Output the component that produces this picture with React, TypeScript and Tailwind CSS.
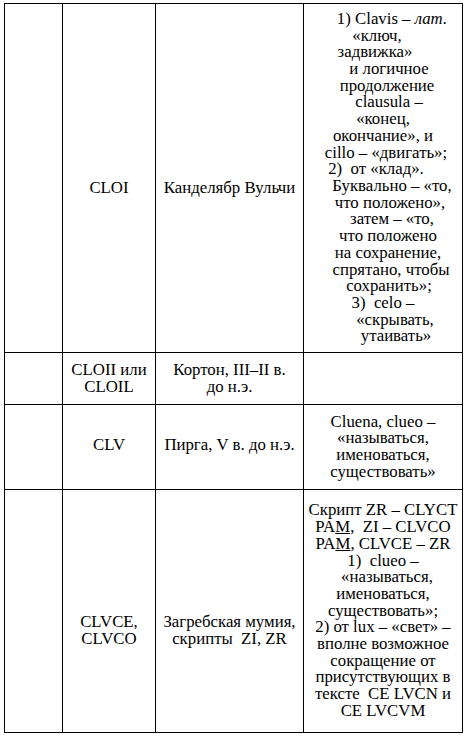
import React from "react";

type Line = { text: React.ReactNode; cls?: string };

const clavis: Line[] = [
  {
    text: (
      <>
        1) Clavis – <i>лат.</i>
      </>
    ),
    cls: "translate-x-[9px]",
  },
  { text: "«ключ,", cls: "-translate-x-[6px]" },
  { text: "задвижка»", cls: "-translate-x-[8px]" },
  { text: "и логичное", cls: "translate-x-[6px]" },
  { text: "продолжение", cls: "translate-x-[4px]" },
  { text: "clausula –", cls: "translate-x-[6px]" },
  { text: "«конец," },
  { text: "окончание», и" },
  { text: "cillo – «двигать»;", cls: "translate-x-[3px]" },
  { text: "2)\u00a0 от «клад».", cls: "-translate-x-[7px]" },
  { text: "Буквально – «то,", cls: "translate-x-[9px]" },
  { text: "что положено»,", cls: "translate-x-[7px]" },
  { text: "затем – «то,", cls: "translate-x-[9px]" },
  { text: "что положено", cls: "translate-x-[5px]" },
  { text: "на сохранение,", cls: "translate-x-[5px]" },
  { text: "спрятано, чтобы", cls: "translate-x-[8px]" },
  { text: "сохранить»;", cls: "translate-x-[6px]" },
  { text: "3)\u00a0 celo –" },
  { text: "«скрывать,", cls: "translate-x-[12px]" },
  { text: "утаивать»", cls: "translate-x-[13px]" },
];

const cluena: Line[] = [
  { text: "Cluena, clueo –" },
  { text: "«называться," },
  { text: "именоваться," },
  { text: "существовать»" },
];

const script: Line[] = [
  { text: "Скрипт ZR – CLYCT" },
  {
    text: (
      <>
        PA<u>M</u>,&nbsp; ZI – CLVCO
      </>
    ),
  },
  {
    text: (
      <>
        PA<u>M</u>, CLVCE – ZR
      </>
    ),
  },
  { text: "1)\u00a0 clueo –" },
  { text: "«называться,", cls: "translate-x-[4px]" },
  { text: "именоваться," },
  { text: "существовать»;" },
  { text: "2) от lux – «свет» –" },
  { text: "вполне возможное" },
  { text: "сокращение от" },
  { text: "присутствующих в" },
  { text: "тексте\u00a0 CE LVCN и" },
  { text: "CE LVCVM" },
];

function Lines({ lines }: { lines: Line[] }) {
  return (
    <>
      {lines.map((l, i) => (
        <div key={i} className={`whitespace-nowrap ${l.cls ?? ""}`}>
          {l.text}
        </div>
      ))}
    </>
  );
}

const cell = "border border-black text-center align-middle p-0";

export default function App() {
  return (
    <div className="min-h-[738px] w-[466px] bg-white pl-[4px] pt-[3px] text-black font-['Liberation_Serif',serif] text-[16.8px] leading-[16.7px]">
      <table className="table-fixed border-collapse w-[458px]">
        <colgroup>
          <col className="w-[58px]" />
          <col className="w-[93px]" />
          <col className="w-[148px]" />
          <col className="w-[159px]" />
        </colgroup>
        <tbody>
          <tr className="h-[349px]">
            <td className={cell}></td>
            <td className={`${cell} pt-[20px]`}>CLOI</td>
            <td className={`${cell} pt-[20px]`}>Канделябр Вульчи</td>
            <td className={cell}>
              <Lines lines={clavis} />
            </td>
          </tr>
          <tr className="h-[52px]">
            <td className={cell}></td>
            <td className={cell}>
              CLOII или
              <br />
              CLOIL
            </td>
            <td className={cell}>
              Кортон, III–II в.
              <br />
              до н.э.
            </td>
            <td className={cell}></td>
          </tr>
          <tr className="h-[85px]">
            <td className={cell}></td>
            <td className={`${cell} pb-[4px]`}>CLV</td>
            <td className={`${cell} pb-[4px]`}>Пирга, V в. до н.э.</td>
            <td className={cell}>
              <Lines lines={cluena} />
            </td>
          </tr>
          <tr className="h-[243px]">
            <td className={cell}></td>
            <td className={`${cell} pt-[40px]`}>
              CLVCE,
              <br />
              CLVCO
            </td>
            <td className={`${cell} pt-[40px]`}>
              Загребская мумия,
              <br />
              скрипты&nbsp; ZI, ZR
            </td>
            <td className={cell}>
              <Lines lines={script} />
            </td>
          </tr>
        </tbody>
      </table>
    </div>
  );
}
